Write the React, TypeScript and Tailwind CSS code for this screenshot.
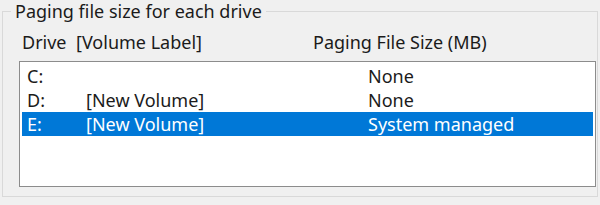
import React from 'react';

const rows = [
    { drive: 'C:', label: '', size: 'None', selected: false },
    { drive: 'D:', label: '[New Volume]', size: 'None', selected: false },
    { drive: 'E:', label: '[New Volume]', size: 'System managed', selected: true },
];

export default function App() {
    return (
        <div className="w-[600px] h-[205px] bg-[#f0f0f0] pt-[1px] pl-[2px] text-[18px] leading-[20px] text-[#1b1b1b] overflow-hidden" style={{ fontFamily: '"Noto Sans", "Open Sans", sans-serif' }}>
            <fieldset className="w-[596px] h-[196px] border border-[#d9d9d9]">
                <legend className="ml-[8px] px-[4px]">Paging file size for each drive</legend>

                <div className="mt-[11px] pl-[19px] flex">
                    <span className="w-[54px]">Drive</span>
                    <span className="w-[237px]">[Volume Label]</span>
                    <span>Paging File Size (MB)</span>
                </div>

                <div className="mt-[9px] ml-[16px] w-[577px] h-[126px] bg-white border border-[#8c8c8c] pt-[2px]">
                    {rows.map((r) => (
                        <div
                            key={r.drive}
                            className={`mx-[2px] h-[24px] pl-[5px] flex items-center ${r.selected ? 'bg-[#0078d7] text-white' : ''}`}
                        >
                            <span className="w-[59px]">{r.drive}</span>
                            <span className="w-[282px]">{r.label}</span>
                            <span>{r.size}</span>
                        </div>
                    ))}
                </div>
            </fieldset>
        </div>
    );
}
